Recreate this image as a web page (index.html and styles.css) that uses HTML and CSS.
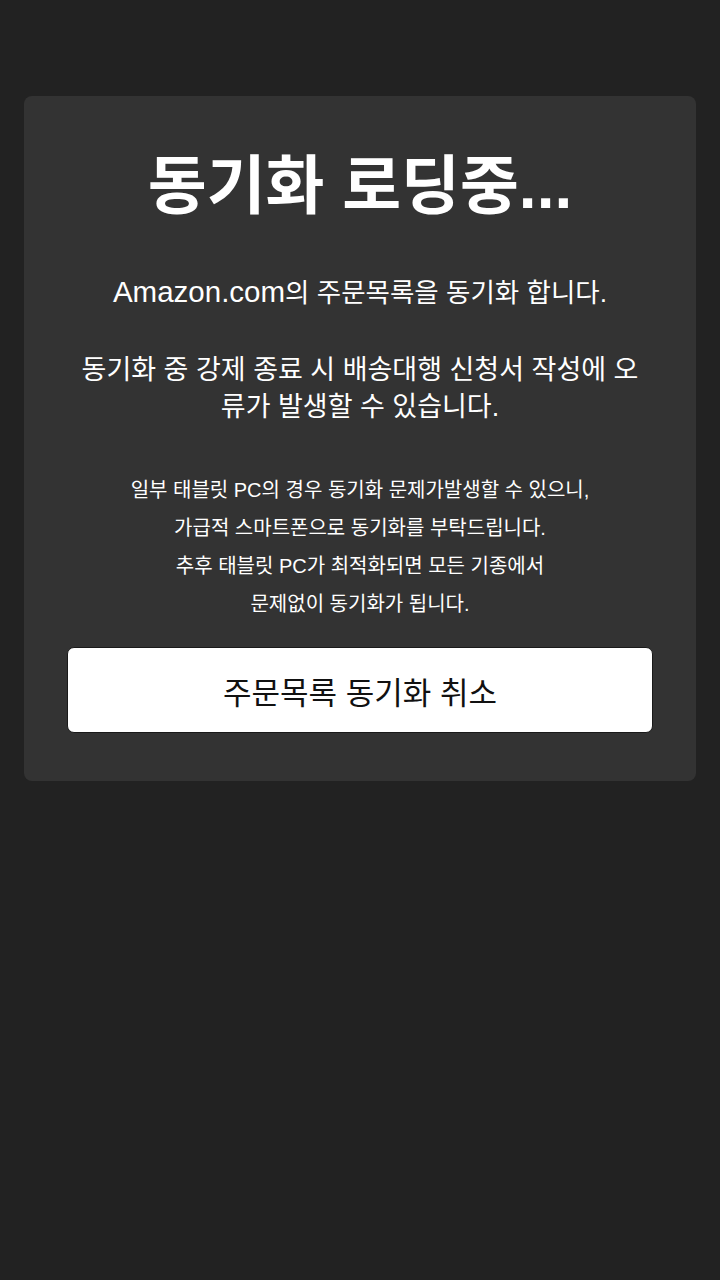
FILE: index.html
```html
<!DOCTYPE html>
<html lang="ko">
<head>
    <meta charset="UTF-8">
    <meta name="viewport" content="width=device-width, initial-scale=1.0">
    <title>동기화 로딩중</title>
    <link rel="stylesheet" href="styles.css">
</head>
<body>
    <div class="page">
        <div class="sync-card">
            <h1 class="title">동기화 로딩중...</h1>
            <p class="lead"><span class="brand">Amazon.com</span>의 주문목록을 동기화 합니다.</p>
            <p class="warning">동기화 중 강제 종료 시 배송대행 신청서 작성에 오류가 발생할 수 있습니다.</p>
            <p class="notice">
                일부 태블릿 PC의 경우 동기화 문제가발생할 수 있으니,<br>
                가급적 스마트폰으로 동기화를 부탁드립니다.<br>
                추후 태블릿 PC가 최적화되면 모든 기종에서<br>
                문제없이 동기화가 됩니다.
            </p>
            <button class="cancel-btn" type="button">주문목록 동기화 취소</button>
        </div>
    </div>
</body>
</html>
```

FILE: styles.css
```css
body {
    margin: 0;
    background-color: #222222;
    font-family: "Liberation Sans", "Noto Sans CJK KR", sans-serif;
    color: #ffffff;
}
.page {
    padding: 96px 24px 0;
}
.sync-card {
    background-color: #333333;
    border-radius: 8px;
    padding: 40px 43px 48px;
    display: flex;
    flex-direction: column;
    align-items: center;
    text-align: center;
}
.title {
    margin: 0;
    font-size: 64px;
    font-weight: bold;
    line-height: 100px;
}
.lead {
    margin: 38px 0 0;
    font-size: 26.5px;
    line-height: 36px;
}
.brand {
    font-size: 29.5px;
}
.warning {
    margin: 41px 0 0;
    max-width: 568px;
    font-size: 27px;
    line-height: 37px;
}
.notice {
    margin: 45px 0 0;
    font-size: 20px;
    line-height: 38px;
}
.cancel-btn {
    margin-top: 24px;
    width: 100%;
    height: 86px;
    background-color: #ffffff;
    border: 1px solid #1a1a1a;
    border-radius: 7px;
    font-family: "Liberation Sans", "Noto Sans CJK KR", sans-serif;
    font-size: 31px;
    color: #111111;
}
```
